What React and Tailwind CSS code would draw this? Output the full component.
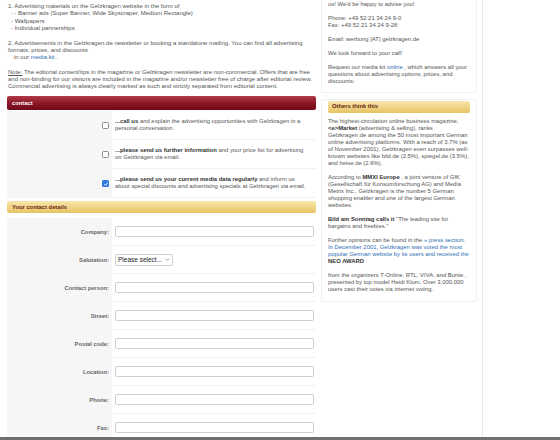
import React from 'react';

const font = { fontFamily: '"Liberation Sans", Arial, sans-serif' };

function Box({ checked }) {
    if (checked) {
        return (
            <span className="flex h-[7px] w-[7px] items-center justify-center rounded-[1.5px] bg-[#2f7de1]">
                <svg viewBox="0 0 10 10" className="h-[6px] w-[6px]">
                    <path d="M2 5.2 L4.2 7.3 L8 2.8" fill="none" stroke="white" strokeWidth="1.6" />
                </svg>
            </span>
        );
    }
    return <span className="block h-[7px] w-[7px] rounded-[1.5px] border border-[#8a8a8a] bg-white" />;
}

function CheckRow({ checked, bold, rest, second }) {
    return (
        <div className="flex h-[29px]">
            <div className="flex w-[105px] items-center justify-end bg-[#f6f6f6] pr-[3px]">
                <Box checked={checked} />
            </div>
            <div className="flex flex-1 flex-col justify-center border-b border-[#f1f1f1] pl-[3px] text-[5.9px] leading-[7.3px] text-[#555]">
                <div className="whitespace-nowrap"><b className="text-[#333]">{bold}</b> {rest}</div>
                <div className="whitespace-nowrap">{second}</div>
            </div>
        </div>
    );
}

function FieldRow({ label, children }) {
    return (
        <div className="flex h-[28px]">
            <div className="flex w-[105px] items-center justify-end bg-[#f6f6f6] pr-[3px] text-[5.8px] font-bold text-[#666]">
                {label}
            </div>
            <div className="flex flex-1 items-center border-b border-[#f1f1f1] pl-[3px] pr-[2px]">
                {children}
            </div>
        </div>
    );
}

function Input() {
    return <div className="h-[11px] w-full rounded-[2px] border border-[#cfcfcf] bg-white" />;
}

const fields = ['Company:', 'Salutation:', 'Contact person:', 'Street:', 'Postal code:', 'Location:', 'Phone:', 'Fax:'];

export default function App() {
    return (
        <div className="flex h-[440px] w-[560px] flex-col overflow-hidden bg-white" style={font}>
            <div className="flex h-[437px] overflow-hidden">
                {/* left column */}
                <div className="ml-[7px] w-[309px] shrink-0 text-[6px] leading-[7.3px] text-[#555]">
                    <div className="whitespace-nowrap pl-[1px] pt-[3px]">
                        <div>1. Advertising materials on the Gelzkragen website in the form of</div>
                        <div className="pl-[3px]">: - Banner ads (Super Banner, Wide Skyscraper, Medium Rectangle)</div>
                        <div className="pl-[3px]">- Wallpapers</div>
                        <div className="pl-[3px]">- Individual partnerships</div>
                        <div className="mt-[7.5px]">2. Advertisements in the Gelzkragen.de newsletter or booking a standalone mailing. You can find all advertising</div>
                        <div>formats, prices, and discounts</div>
                        <div className="pl-[6px]">in our <span className="text-[#2f6fb3]">media kit</span> .</div>
                        <div className="mt-[7px]"><span className="underline">Note:</span> The editorial content/tips in the magazine or Gelzkragen newsletter are non-commercial. Offers that are free</div>
                        <div>and non-binding for our visitors are included in the magazine and/or newsletter free of charge after editorial review.</div>
                        <div>Commercial advertising is always clearly marked as such and strictly separated from editorial content.</div>
                    </div>

                    <div className="mt-[6px] flex h-[14px] items-center rounded-[2px] bg-gradient-to-b from-[#b23a4a] via-[#8d1527] to-[#6e0a1a] pl-[5px] text-[5.8px] font-bold text-white">
                        contact
                    </div>
                    <div className="pt-[1px]">
                        <CheckRow bold="...call us" rest="and explain the advertising opportunities with Gelzkragen in a" second="personal conversation." />
                        <CheckRow bold="...please send us further information" rest="and your price list for advertising" second="on Gelzkragen via email." />
                        <CheckRow checked bold="...please send us your current media data regularly" rest="and inform us" second="about special discounts and advertising specials at Gelzkragen via email." />
                    </div>

                    <div className="mt-[3px] flex h-[12px] items-center rounded-[2px] bg-gradient-to-b from-[#f7e6ad] to-[#e7c462] pl-[5px] text-[5.8px] font-bold text-[#6b2412]">
                        Your contact details
                    </div>
                    <div className="pt-[5px]">
                        {fields.map(f => (
                            <FieldRow key={f} label={f}>
                                {f === 'Salutation:' ? (
                                    <div className="flex h-[12px] w-[58px] items-center justify-between rounded-[2px] border border-[#cfcfcf] bg-white px-[2px] text-[6.5px] text-[#222]">
                                        <span>Please select...</span>
                                        <svg viewBox="0 0 10 10" className="h-[5px] w-[5px]">
                                            <path d="M2 3.5 L5 6.5 L8 3.5" fill="none" stroke="#555" strokeWidth="1.3" />
                                        </svg>
                                    </div>
                                ) : <Input />}
                            </FieldRow>
                        ))}
                    </div>
                </div>

                {/* right column */}
                <div className="ml-[5px] w-[156px] shrink-0 text-[5.9px] leading-[7px] text-[#555]">
                    <div className="whitespace-nowrap rounded-b-[2px] border border-t-0 border-[#f0f0f0] px-[6px] pb-[7px] pt-[0.5px]">
                        <div>us! We'd be happy to advise you!</div>
                        <div className="mt-[7px]">Phone: +49 52 21 34 24 9-0</div>
                        <div>Fax: +49 52 21 34 24 9-28</div>
                        <div className="mt-[7px]">Email: werbung [AT] gelzkragen.de</div>
                        <div className="mt-[7px]">We look forward to your call!</div>
                        <div className="mt-[7px]">Request our media kit <span className="text-[#2f6fb3]">online</span> , which answers all your</div>
                        <div>questions about advertising options, prices, and</div>
                        <div>discounts:</div>
                    </div>

                    <div className="mt-[6px] whitespace-nowrap rounded-[2px] border border-[#f0f0f0] px-[6px] pb-[8px] pt-[1px]">
                        <div className="flex h-[12px] items-center rounded-[2px] bg-gradient-to-b from-[#f7e6ad] to-[#e7c462] pl-[4px] text-[5.8px] font-bold text-[#6b2412]">
                            Others think this
                        </div>
                        <div className="mt-[5px]">
                            <div>The highest-circulation online business magazine,</div>
                            <div><b className="text-[#333]">&lt;e&gt;Market</b> (advertising &amp; selling), ranks</div>
                            <div>Gelzkragen.de among the 50 most important German</div>
                            <div>online advertising platforms. With a reach of 3.7% (as</div>
                            <div>of November 2001), Gelzkragen even surpasses well-</div>
                            <div>known websites like bild.de (2.5%), spiegel.de (3.5%),</div>
                            <div>and heise.de (2.6%).</div>
                        </div>
                        <div className="mt-[7px]">
                            <div>According to <b className="text-[#333]">MMXI Europe</b> , a joint venture of GfK</div>
                            <div>(Gesellschaft für Konsumforschung AG) and Media</div>
                            <div>Metrix Inc., Gelzkragen is the number 5 German</div>
                            <div>shopping enabler and one of the largest German</div>
                            <div>websites.</div>
                        </div>
                        <div className="mt-[7px]">
                            <div><b className="text-[#333]">Bild am Sonntag calls it</b> "The leading site for</div>
                            <div>bargains and freebies."</div>
                        </div>
                        <div className="mt-[7px]">
                            <div>Further opinions can be found in the <span className="text-[#2f6fb3]">» press section.</span></div>
                            <div className="text-[#2f6fb3]">In December 2001, Gelzkragen was voted the most</div>
                            <div className="text-[#2f6fb3]">popular German website by its users and received the</div>
                            <div className="font-bold text-[#333]">NEO AWARD</div>
                        </div>
                        <div className="mt-[7px]">
                            <div>from the organizers T-Online, RTL, VIVA, and Bunte ,</div>
                            <div>presented by top model Heidi Klum. Over 3,000,000</div>
                            <div>users cast their votes via internet voting.</div>
                        </div>
                    </div>
                </div>

                <div className="ml-[5px] h-full border-l border-[#e8e8e8]" />
            </div>
            <div className="h-[3px] bg-[#6f6f6f]" />
        </div>
    );
}
